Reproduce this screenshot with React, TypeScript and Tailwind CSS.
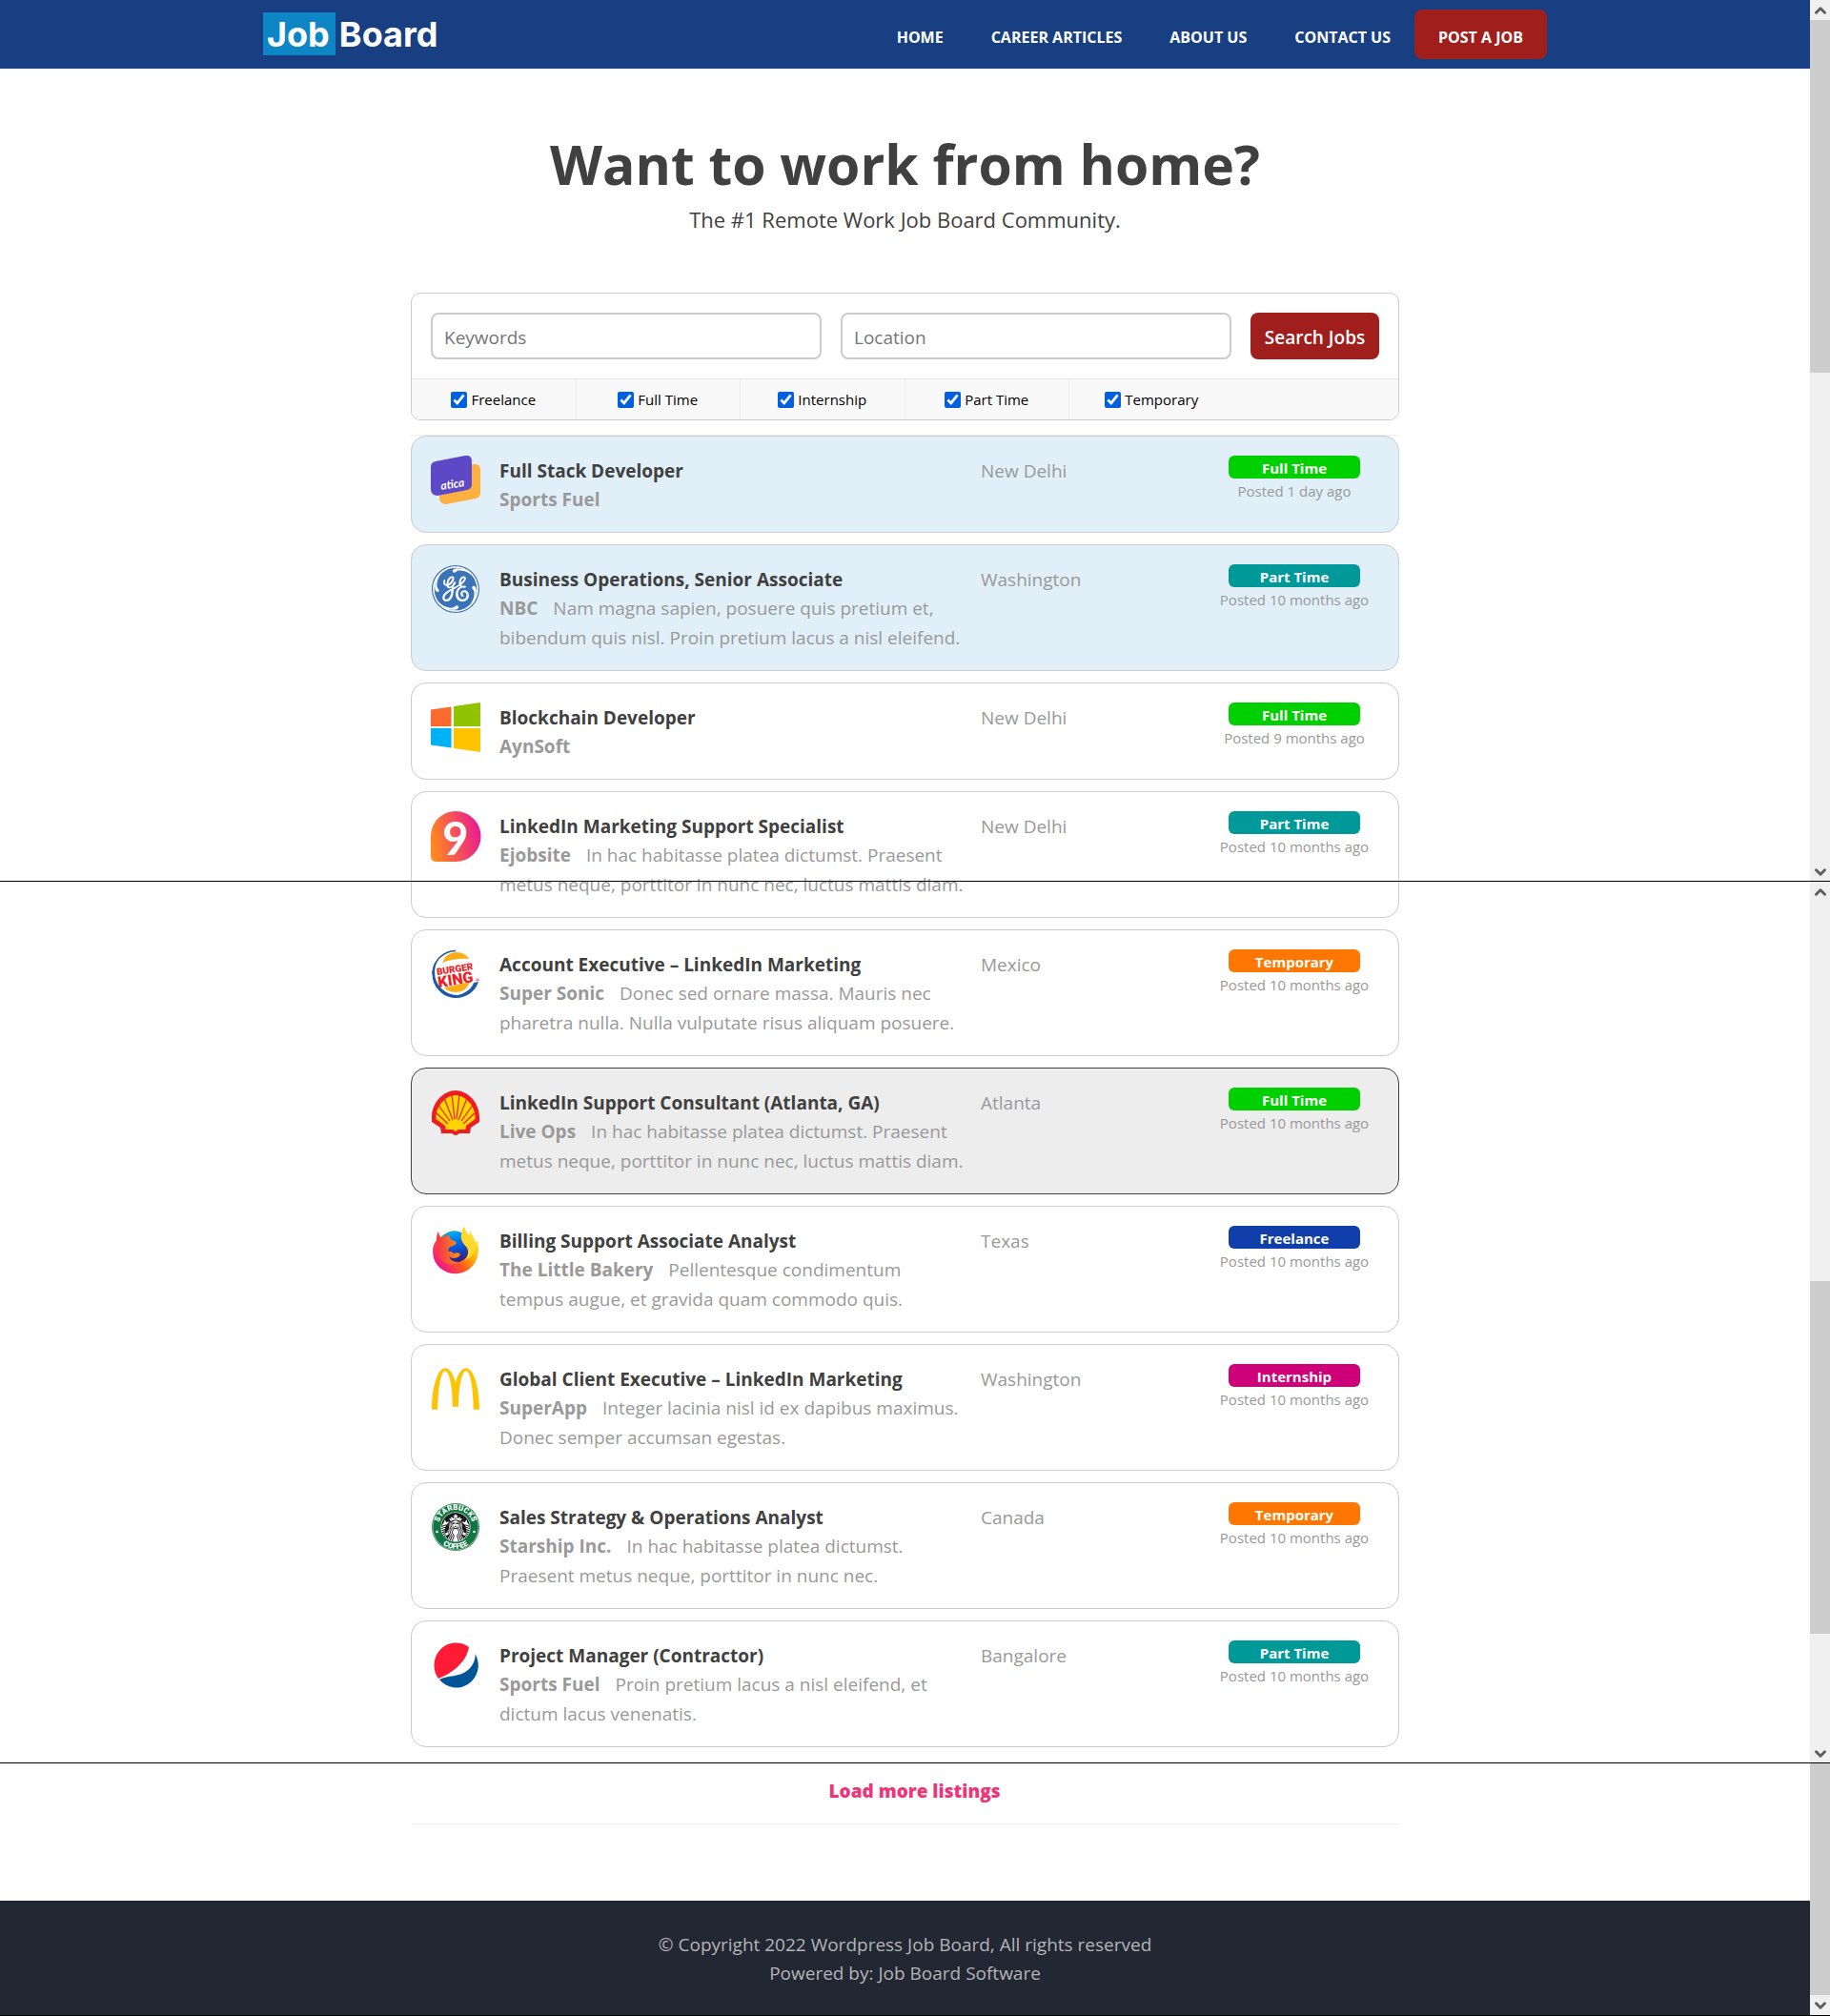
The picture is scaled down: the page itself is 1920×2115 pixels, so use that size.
import type { ReactNode } from 'react';
import { ChevronDown, ChevronUp } from 'lucide-react';
import { SiGeneralelectric, SiMcdonalds, SiStarbucks } from 'react-icons/si';

type JobType = 'Full Time' | 'Part Time' | 'Temporary' | 'Freelance' | 'Internship';

type Job = {
  title: string;
  company: string;
  tagline?: string;
  location: string;
  type: JobType;
  posted: string;
  logo: ReactNode;
  state?: 'featured' | 'active';
};

const badgeColors: Record<JobType, string> = {
  'Full Time': 'bg-[#00cf00]',
  'Part Time': 'bg-[#009999]',
  Temporary: 'bg-[#ff7700]',
  Freelance: 'bg-[#103eab]',
  Internship: 'bg-[#ce0079]',
};

const cardColors = {
  default: 'border-[#cccccc] bg-white',
  featured: 'border-[#cccccc] bg-[#e1eff9]',
  active: 'border-[#404040] bg-[#ededed]',
};

function AticaLogo() {
  return (
    <svg viewBox="0 0 52 52" className="size-[52px]">
      <path
        d="M0 12Q0 7 5 6L36 0Q43-1 43 6V30Q43 35 38 36L7 42Q0 42 0 35Z"
        transform="translate(9 9)"
        fill="#fcb040"
      />
      <path d="M0 12Q0 7 5 6L36 0Q43-1 43 6V30Q43 35 38 36L7 42Q0 42 0 35Z" fill="#5d48c6" />
      <text
        x="11"
        y="36"
        transform="rotate(-9 11 36)"
        fill="#fff"
        className="font-['Lato'] text-[12px] font-bold italic"
      >
        atica
      </text>
    </svg>
  );
}

function GeLogo() {
  return (
    <span className="m-px flex size-[50px] items-center justify-center rounded-full bg-white">
      <SiGeneralelectric className="size-[50px] text-[#3b73b9]" />
    </span>
  );
}

function WindowsLogo() {
  return (
    <svg viewBox="0 0 52 52" className="size-[52px]">
      <path d="M0 7.5 21.5 4.5V25H0Z" fill="#fb6a2d" />
      <path d="M24 4 52 0V25H24Z" fill="#90c300" />
      <path d="M0 27H21.5V47.5L0 44.5Z" fill="#00b1f4" />
      <path d="M24 27H52V52L24 48Z" fill="#ffc400" />
    </svg>
  );
}

function NineLogo() {
  return (
    <svg viewBox="0 0 52 53" className="h-[53px] w-[52px] overflow-visible">
      <defs>
        <linearGradient id="nine" x1="0" y1="0.6" x2="1" y2="0.4">
          <stop offset="0" stopColor="#ff8a1c" />
          <stop offset="0.5" stopColor="#f4515a" />
          <stop offset="1" stopColor="#e91a93" />
        </linearGradient>
      </defs>
      <path d="M26 0A26 26 0 0 1 26 53H6Q0 53 0 47V26A26 26 0 0 1 26 0Z" fill="url(#nine)" />
      <text x="26" y="46" textAnchor="middle" fill="#fff" className="font-['Lato'] text-[47px] font-bold">
        9
      </text>
    </svg>
  );
}

function BurgerLogo() {
  return (
    <svg viewBox="0 0 52 52" className="size-[52px]">
      <circle cx="26" cy="26" r="24.5" fill="#1b5ba5" />
      <circle cx="28" cy="24" r="24" fill="#fff" />
      <path d="M26 1.5A24.5 24.5 0 0 0 2 26" fill="none" stroke="#1b5ba5" strokeWidth="1.4" />
      <path d="M12 14Q16 3 27 3Q36 3 40 10Q26 9 12 14Z" fill="#faaf18" />
      <path d="M14 40 41 34Q38 44 27 45Q18 45 14 40Z" fill="#faaf18" />
      <path d="M50 34A25 25 0 0 1 9 44Q22 53 36 45 43 41 45 35Z" fill="#1b5ba5" />
      <g transform="rotate(-9 26 26)" fill="#ed1c24" textAnchor="middle" className="font-['Roboto'] font-black">
        <text x="26" y="24" className="text-[10px]">BURGER</text>
        <text x="25" y="37" className="text-[16px]">KING</text>
      </g>
      <circle cx="49" cy="32" r="1.8" fill="#f08a8e" />
    </svg>
  );
}

function ShellLogo() {
  return (
    <svg viewBox="0 0 52 52" className="size-[52px]">
      <path
        d="M26 3C14 3 1 15 1 31V36L10 42 11 48H22Q26 52 30 48H41L42 42 51 36V31C51 15 38 3 26 3Z"
        fill="#ee1c25"
      />
      <path
        d="M26 8C17 8 5.500 18 5.500 31V33L15 40 15.500 44H23L26 46 29 44H36.500L37 40 46.500 33V31C46.500 18 35 8 26 8Z"
        fill="#ffd500"
      />
      <g stroke="#ee1c25" strokeWidth="1.200">
        <path d="M25 33 22 7M27 33 30 7" />
        <path d="M23 34 14 11M29 34 38 11" />
        <path d="M20 35 7 17M32 35 45 17" />
        <path d="M18 38 4 25M34 38 48 25" />
      </g>
    </svg>
  );
}

function FirefoxLogo() {
  return (
    <svg viewBox="0 0 52 52" className="size-[52px]">
      <defs>
        <linearGradient id="fox-body" x1="0.9" y1="0.1" x2="0.1" y2="0.8">
          <stop offset="0" stopColor="#fff44f" />
          <stop offset="0.35" stopColor="#ffb300" />
          <stop offset="0.65" stopColor="#ff5722" />
          <stop offset="1" stopColor="#f0148c" />
        </linearGradient>
        <linearGradient id="fox-globe" x1="0.3" y1="0" x2="0.6" y2="1">
          <stop offset="0" stopColor="#00b4f5" />
          <stop offset="0.5" stopColor="#0560e0" />
          <stop offset="1" stopColor="#36177b" />
        </linearGradient>
        <linearGradient id="fox-head" x1="0" y1="0.5" x2="1" y2="0.4">
          <stop offset="0" stopColor="#f7304c" />
          <stop offset="1" stopColor="#ff980e" />
        </linearGradient>
      </defs>
      <path
        d="M8 6Q8 10 10 12Q16 6 25 5Q30 6 32 9Q33 4 35 1Q37 7 40 10L41 5Q45 11 47 17L49 16Q51 25 49 32A24 24 0 0 1 3 34Q0 22 6 15Q6 9 8 6Z"
        fill="url(#fox-body)"
      />
      <circle cx="25" cy="22" r="16.500" fill="url(#fox-globe)" />
      <path
        d="M35 1Q31 7 32 14Q33 18 38 23Q41 29 36 36Q45 33 46 24Q46 14 39 9Q36 6 35 1Z"
        fill="#ffd92e"
      />
      <path
        d="M8 6Q8 10 11 13Q15 10 20 10Q19 13 22 15Q26 16 27 18Q25 21 20 22Q18 24 18 27Q21 26 24 29Q29 27 31 30Q29 34 24 34Q21 34 19 32Q21 38 29 38Q20 43 12 37Q5 31 7 20Q5 13 8 6Z"
        fill="url(#fox-head)"
      />
    </svg>
  );
}

function ArchesLogo() {
  return <SiMcdonalds className="m-px size-[50px] text-[#fdc305]" />;
}

function CoffeeLogo() {
  return (
    <span className="relative block size-[52px]">
      <svg viewBox="0 0 52 52" className="size-[52px]">
        <defs>
          <path id="cup-top" d="M8 26A18 18 0 0 1 44 26" />
          <path id="cup-bottom" d="M3 26A23 23 0 0 0 49 26" />
        </defs>
        <circle cx="26" cy="26" r="25" fill="#0f7541" />
        <circle cx="26" cy="26" r="24" fill="none" stroke="#fff" strokeWidth="0.500" />
        <circle cx="26" cy="26" r="15.500" fill="#fff" />
        <g fill="#fff" textAnchor="middle" className="font-['Roboto'] text-[8px] font-black">
          <text>
            <textPath href="#cup-top" startOffset="50%">STARBUCKS</textPath>
          </text>
          <text>
            <textPath href="#cup-bottom" startOffset="50%">COFFEE</textPath>
          </text>
        </g>
        <circle cx="6.500" cy="31" r="1.300" fill="#fff" />
        <circle cx="45.500" cy="31" r="1.300" fill="#fff" />
      </svg>
      <SiStarbucks className="absolute inset-[11px] size-[30px] text-[#1a1a1a]" />
    </span>
  );
}

function PepsiLogo() {
  return (
    <svg viewBox="0 0 52 52" className="size-[52px]">
      <path d="M40 7A23 23.500 0 0 0 8 40C21 35 37 24 40 7Z" fill="#ff1a35" />
      <path d="M9 41C18 36 30 39 39 31C45 26 47 19 46.500 14A23 23.500 0 0 1 9 41Z" fill="#005596" />
    </svg>
  );
}

const jobs: Job[] = [
  {
    title: 'Full Stack Developer',
    company: 'Sports Fuel',
    location: 'New Delhi',
    type: 'Full Time',
    posted: 'Posted 1 day ago',
    logo: <AticaLogo />,
    state: 'featured',
  },
  {
    title: 'Business Operations, Senior Associate',
    company: 'NBC',
    tagline: 'Nam magna sapien, posuere quis pretium et, bibendum quis nisl. Proin pretium lacus a nisl eleifend.',
    location: 'Washington',
    type: 'Part Time',
    posted: 'Posted 10 months ago',
    logo: <GeLogo />,
    state: 'featured',
  },
  {
    title: 'Blockchain Developer',
    company: 'AynSoft',
    location: 'New Delhi',
    type: 'Full Time',
    posted: 'Posted 9 months ago',
    logo: <WindowsLogo />,
  },
  {
    title: 'LinkedIn Marketing Support Specialist',
    company: 'Ejobsite',
    tagline: 'In hac habitasse platea dictumst. Praesent metus neque, porttitor in nunc nec, luctus mattis diam.',
    location: 'New Delhi',
    type: 'Part Time',
    posted: 'Posted 10 months ago',
    logo: <NineLogo />,
  },
  {
    title: 'Account Executive – LinkedIn Marketing',
    company: 'Super Sonic',
    tagline: 'Donec sed ornare massa. Mauris nec pharetra nulla. Nulla vulputate risus aliquam posuere.',
    location: 'Mexico',
    type: 'Temporary',
    posted: 'Posted 10 months ago',
    logo: <BurgerLogo />,
  },
  {
    title: 'LinkedIn Support Consultant (Atlanta, GA)',
    company: 'Live Ops',
    tagline: 'In hac habitasse platea dictumst. Praesent metus neque, porttitor in nunc nec, luctus mattis diam.',
    location: 'Atlanta',
    type: 'Full Time',
    posted: 'Posted 10 months ago',
    logo: <ShellLogo />,
    state: 'active',
  },
  {
    title: 'Billing Support Associate Analyst',
    company: 'The Little Bakery',
    tagline: 'Pellentesque condimentum tempus augue, et gravida quam commodo quis.',
    location: 'Texas',
    type: 'Freelance',
    posted: 'Posted 10 months ago',
    logo: <FirefoxLogo />,
  },
  {
    title: 'Global Client Executive – LinkedIn Marketing',
    company: 'SuperApp',
    tagline: 'Integer lacinia nisl id ex dapibus maximus. Donec semper accumsan egestas.',
    location: 'Washington',
    type: 'Internship',
    posted: 'Posted 10 months ago',
    logo: <ArchesLogo />,
  },
  {
    title: 'Sales Strategy & Operations Analyst',
    company: 'Starship Inc.',
    tagline: 'In hac habitasse platea dictumst. Praesent metus neque, porttitor in nunc nec.',
    location: 'Canada',
    type: 'Temporary',
    posted: 'Posted 10 months ago',
    logo: <CoffeeLogo />,
  },
  {
    title: 'Project Manager (Contractor)',
    company: 'Sports Fuel',
    tagline: 'Proin pretium lacus a nisl eleifend, et dictum lacus venenatis.',
    location: 'Bangalore',
    type: 'Part Time',
    posted: 'Posted 10 months ago',
    logo: <PepsiLogo />,
  },
];

const navLinks = ['HOME', 'CAREER ARTICLES', 'ABOUT US', 'CONTACT US'];
const jobTypes: JobType[] = ['Freelance', 'Full Time', 'Internship', 'Part Time', 'Temporary'];

function Header() {
  return (
    <header className="bg-[#173f82]">
      <div className="mx-auto flex h-[72px] max-w-[1347px] items-center justify-between">
        <a href="#" className="mb-px flex items-center gap-1 font-['Inter'] text-[36px] font-bold text-white">
          <span className="flex h-[45px] items-center bg-[#0e86c5] pl-1 pr-1.5">Job</span>
          <span>Board</span>
        </a>
        <nav className="flex items-center text-[16px] font-bold text-white">
          {navLinks.map((link) => (
            <a key={link} href="#" className="px-[25px] pt-1.5">
              {link}
            </a>
          ))}
          <a href="#" className="flex h-[52px] items-center rounded-lg bg-[#a01e1b] px-[25px] pt-1.5">
            POST A JOB
          </a>
        </nav>
      </div>
    </header>
  );
}

function SearchForm() {
  return (
    <form className="overflow-hidden rounded-[10px] border border-[#cccccc]" onSubmit={(e) => e.preventDefault()}>
      <div className="flex gap-5 p-5">
        <input
          type="text"
          aria-label="Keywords"
          placeholder="Keywords"
          className="h-[49px] min-w-0 flex-1 rounded-lg border-2 border-[#cccccc] px-3 pt-0.5 placeholder:text-[#757575]"
        />
        <input
          type="text"
          aria-label="Location"
          placeholder="Location"
          className="h-[49px] min-w-0 flex-1 rounded-lg border-2 border-[#cccccc] px-3 pt-0.5 placeholder:text-[#757575]"
        />
        <button type="submit" className="h-[49px] w-[135px] rounded-lg bg-[#a01e1b] pt-0.5 font-semibold text-white">
          Search Jobs
        </button>
      </div>
      <div className="grid grid-cols-6 border-t border-[#e3e3e3] bg-[#f9f9f9]">
        {jobTypes.map((type) => (
          <label
            key={type}
            className="flex h-[42px] items-center justify-center gap-1 border-r border-[#eeeeee] text-[15px] text-black last:border-r-0"
          >
            <input type="checkbox" defaultChecked className="size-[17px] accent-[#0060df]" />
            {type}
          </label>
        ))}
      </div>
    </form>
  );
}

function JobCard({ job }: { job: Job }) {
  return (
    <li className={`flex rounded-2xl border px-5 pb-[18px] pt-5 text-[#999999] ${cardColors[job.state ?? 'default']}`}>
      <div className="w-[72px] shrink-0">{job.logo}</div>
      <div className="min-w-0 flex-1 pr-3 pt-0.5">
        <h3 className="font-bold leading-[29px] text-[#404040]">{job.title}</h3>
        <p className="leading-[31px]">
          <strong className="mr-4">{job.company}</strong>
          {job.tagline}
        </p>
      </div>
      <div className="w-[240px] shrink-0 pt-0.5 leading-[29px]">{job.location}</div>
      <div className="w-[178px] shrink-0 text-center text-[15px] leading-6">
        <div className={`mx-5 mb-px h-6 rounded-md pt-px font-bold text-white ${badgeColors[job.type]}`}>
          {job.type}
        </div>
        <time>{job.posted}</time>
      </div>
    </li>
  );
}

function ScrollButton({ up = false }: { up?: boolean }) {
  const Icon = up ? ChevronUp : ChevronDown;
  return (
    <div className="flex h-[21px] shrink-0 items-center justify-center bg-[#f0f0f0]">
      <Icon className="size-[18px] text-[#606060]" strokeWidth={4} />
    </div>
  );
}

function Scrollbars() {
  return (
    <div className="flex w-[21px] shrink-0 flex-col bg-[#f0f0f0]">
      <div className="flex h-[925px] flex-col">
        <ScrollButton up />
        <div className="h-[370px] bg-[#cdcdcd]" />
        <div className="flex-1" />
        <ScrollButton />
      </div>
      <div className="flex h-[925px] flex-col">
        <ScrollButton up />
        <div className="flex-1" />
        <div className="h-[370px] bg-[#cdcdcd]" />
        <div className="h-[115px]" />
        <ScrollButton />
      </div>
      <div className="flex flex-1 flex-col">
        <div className="flex-1 bg-[#cdcdcd]" />
        <ScrollButton />
      </div>
    </div>
  );
}

export default function App() {
  return (
    <div className="relative flex border-b border-black bg-white font-['Open_Sans','Noto_Sans',sans-serif] text-[19px] leading-[30px] text-[#404040]">
      <div className="min-w-0 flex-1">
        <Header />

        {/* Hero */}
        <section className="pb-[59px] pt-[60px] text-center">
          <h1 className="text-[57px] font-bold leading-[80px]">Want to work from home?</h1>
          <p className="pt-px text-[22px] leading-[35px]">The #1 Remote Work Job Board Community.</p>
        </section>

        <main className="mx-auto max-w-[1037px]">
          <SearchForm />

          <ul className="mt-[15px] flex flex-col gap-3 border-t border-[#eeeeee]">
            {jobs.map((job) => (
              <JobCard key={job.title} job={job} />
            ))}
          </ul>

          <div className="mb-20 border-b border-[#eeeeee] pb-[19px] pl-5 pt-[31px] text-center">
            <a href="#" className="font-extrabold text-[#ee3578]">
              Load more listings
            </a>
          </div>
        </main>

        <footer className="bg-[#222734] pb-[29px] pt-[31px] text-center text-[#b4b4b4]">
          <p>© Copyright 2022 Wordpress Job Board, All rights reserved</p>
          <p>
            Powered by: <a href="#">Job Board Software</a>
          </p>
        </footer>
      </div>

      <Scrollbars />

      {/* Page break rules */}
      <div className="absolute inset-x-0 top-[924px] h-px bg-black" />
      <div className="absolute inset-x-0 top-[1849px] h-px bg-black" />
    </div>
  );
}
